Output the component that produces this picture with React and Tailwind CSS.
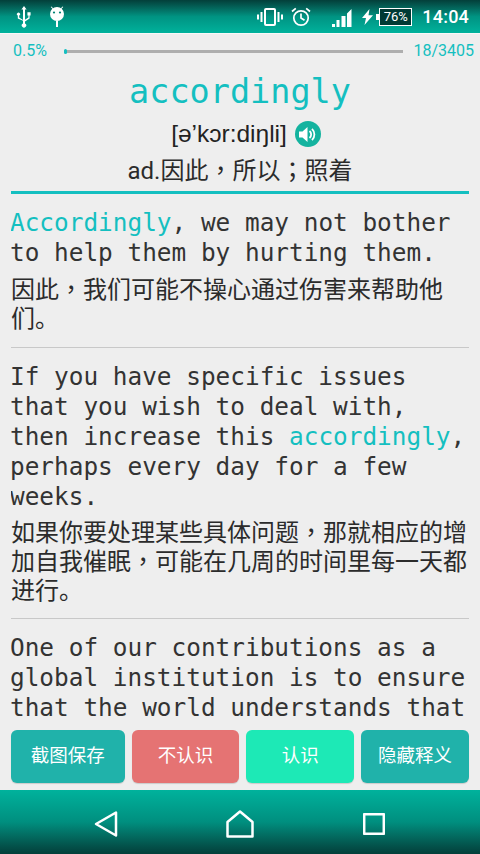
import React from 'react';

const cjk = '"Roboto","Noto Sans CJK SC",sans-serif';

// the screenshot's font centres the comma and semicolon, the TC face does that too
function Zh({ text }) {
  return text.split(/([，；])/).map((part, i) =>
    i % 2 === 1 ? (
      <span key={i} className="leading-none font-['Noto_Sans_CJK_TC',sans-serif]">{part}</span>
    ) : (
      part
    )
  );
}

function StatusBar() {
  return (
    <div className="h-[33px] shrink-0 bg-gradient-to-b from-[#033f3a] via-[#009382] to-[#00b29c] flex items-center text-white">
      {/* usb */}
      <svg width="16" height="22" viewBox="0 0 16 22" className="ml-[16px]" fill="white">
        <path d="M8 0l2.6 3.6H9v10.2l3.4-2.2V9.4h-1V6.2h3.2v3.2h-1v3l-4.6 3v2a2.2 2.2 0 1 1-2 0v-2.6L1.8 12.4V9.6a1.6 1.6 0 1 1 1.4 0v2l3.8 2.4V3.6H5.4z" />
      </svg>
      {/* android */}
      <svg width="16" height="22" viewBox="0 0 16 22" className="ml-[17px]" fill="white">
        <circle cx="8" cy="8" r="7" />
        <path d="M7 15h2v6H7zM2.4.4l3 3-.7.7-3-3zM13.6.4l.7.7-3 3-.7-.7z" />
        <circle cx="5" cy="6.500" r="1.100" fill="#008375" />
        <circle cx="11" cy="6.500" r="1.100" fill="#008375" />
      </svg>
      <div className="ml-auto flex items-center">
        {/* vibrate */}
        <svg width="26" height="18" viewBox="0 0 26 18" fill="none" stroke="white" strokeWidth="1.500">
          <rect x="8" y="1" width="10" height="16" rx="1" strokeWidth="2" />
          <path d="M4.500 4v10M1 6.500v5M21.500 4v10M25 6.500v5" strokeWidth="2" />
        </svg>
        {/* alarm */}
        <svg width="20" height="20" viewBox="0 0 20 20" fill="none" stroke="white" strokeWidth="1.700" className="ml-[8px]">
          <circle cx="10" cy="11" r="7.200" />
          <path d="M10 6.500V11l3.500 2.200M1 4.500L4.800 1.300M19 4.500L15.200 1.300" />
        </svg>
        {/* signal */}
        <svg width="20" height="20" viewBox="0 0 20 20" fill="white" className="ml-[21px]">
          <path d="M0 20h3v-3H0zM4.500 20h3v-7h-3zM9.500 20h4V9h-4zM15 20h4.500V2L15 6.500z" />
        </svg>
        {/* charging */}
        <svg width="11" height="16" viewBox="0 0 11 16" fill="white" className="ml-[10px]">
          <path d="M7.500 0L0 9h4l-1.500 7L11 6.200H6.500z" />
        </svg>
        {/* battery */}
        <div className="ml-[6px] relative w-[33px] h-[18px] border border-white bg-[#013a35] flex items-center justify-center text-[13px] leading-none font-['Roboto',sans-serif]">
          <span className="absolute -left-[4px] top-[5px] w-[3px] h-[6px] bg-white" />
          76%
        </div>
        <span className="ml-[10px] mr-[11px] text-[18px] font-medium tracking-[0.2px] leading-none font-['Roboto',sans-serif]">14:04</span>
      </div>
    </div>
  );
}

function Progress() {
  return (
    <div className="h-[34px] flex items-center pl-[13px] pr-[6px] text-[16px] text-[#14bfc0] font-['Roboto',sans-serif]">
      <span>0.5%</span>
      <div className="flex-1 h-[3px] bg-[#aeaeae] ml-[17px] mr-[10px] relative">
        <span className="absolute left-0 -top-px w-[3px] h-[5px] rounded-full bg-[#14bfc0]" />
      </div>
      <span>18/3405</span>
    </div>
  );
}

function Sentence({ en, zh, gap = 'mt-[8px]', pad = 'pb-[13px] border-b border-[#c8c8c8]' }) {
  return (
    <div className={`pt-[14px] ${pad}`}>
      <p className="-ml-px text-[24.400px] leading-[30px] whitespace-pre text-[#333333] font-['DejaVu_Sans_Mono',monospace]">{en}</p>
      {zh && (
        <p className={`${gap} text-[24px] leading-[29px] text-[#2b2b2b]`} style={{ fontFamily: cjk }}><Zh text={zh} /></p>
      )}
    </div>
  );
}

const hl = (t) => <span className="text-[#14bfc0]">{t}</span>;

export default function App() {
  const btn = 'h-[53px] rounded-[6px] text-white text-[18.500px] flex items-center justify-center shadow-[0_1px_1px_rgba(0,0,0,0.15)]';
  return (
    <div className="w-[480px] h-[854px] bg-[#eeeeee] flex flex-col overflow-hidden">
      <StatusBar />
      <div className="h-px shrink-0 bg-[#f8f8f8]" />
      <Progress />

      <div className="text-center text-[33.500px] leading-[44px] text-[#14bfc0] mt-[2px] font-['DejaVu_Sans_Mono',monospace]">accordingly</div>
      <div className="flex items-center justify-center ml-[12px] mt-[5px] h-[30px] text-[24.500px] text-[#222222] font-['Liberation_Sans',sans-serif]">
        <span>[ə’kɔr:diŋli]</span>
        <span className="ml-[8px] w-[26px] h-[26px] rounded-full bg-[#14b39f] flex items-center justify-center">
          <svg width="19" height="17" viewBox="0 0 19 17" fill="white">
            <path d="M1 5.500h3.500L9.500 1v15l-5-4.500H1z" />
            <path d="M11.500 5a4.500 4.500 0 0 1 0 7M14 2.800a8 8 0 0 1 0 11.400" fill="none" stroke="white" strokeWidth="1.800" />
          </svg>
        </span>
      </div>
      <div className="text-center text-[24px] leading-[30px] mt-[7px] text-[#2b2b2b]" style={{ fontFamily: cjk }}><Zh text="ad.因此，所以；照着" /></div>
      <div className="mx-[11px] mt-[5px] h-[3px] shrink-0 bg-[#14bfc0]" />

      <div className="flex-1 min-h-0 overflow-hidden mx-[11px]">
        <Sentence
          en={<>{hl('Accordingly')}, we may not bother{'\n'}to help them by hurting them.</>}
          zh="因此，我们可能不操心通过伤害来帮助他们。"
        />
        <Sentence
          gap="mt-[7px]"
          pad="pb-[12px] border-b border-[#c8c8c8]"
          en={<>If you have specific issues{'\n'}that you wish to deal with,{'\n'}then increase this {hl('accordingly')},{'\n'}perhaps every day for a few{'\n'}weeks.</>}
          zh="如果你要处理某些具体问题，那就相应的增加自我催眠，可能在几周的时间里每一天都进行。"
        />
        <Sentence
          pad=""
          en={<>One of our contributions as a{'\n'}global institution is to ensure{'\n'}that the world understands that</>}
        />
      </div>

      <div className="h-[70px] shrink-0 flex items-start pt-[10px] gap-[7px] pl-[11px] pr-[11px]" style={{ fontFamily: cjk }}>
        <div className={`${btn} w-[114px] bg-[#20b2aa]`}>截图保存</div>
        <div className={`${btn} w-[108px] bg-[#e57373]`}>不认识</div>
        <div className={`${btn} w-[108px] bg-[#1de9b6]`}>认识</div>
        <div className={`${btn} w-[108px] bg-[#20b2aa]`}>隐藏释义</div>
      </div>

      <div className="h-[64px] shrink-0 pt-[3px] bg-gradient-to-b from-[#00b29c] via-[#008f7f] to-[#033f3a] flex items-center">
        <svg width="24" height="26" viewBox="0 0 24 26" fill="none" stroke="white" strokeWidth="2.500" strokeLinejoin="round" className="ml-[94px]">
          <path d="M22 1.500v23L2 13z" />
        </svg>
        <svg width="28" height="28" viewBox="0 0 28 28" fill="none" stroke="white" strokeWidth="2.500" strokeLinejoin="round" className="ml-[108px]">
          <path d="M1.500 12L14 1.500 26.500 12v14.500h-25z" />
        </svg>
        <svg width="22" height="22" viewBox="0 0 22 22" fill="none" stroke="white" strokeWidth="2.500" strokeLinejoin="round" className="ml-[109px]">
          <rect x="1.200" y="1.200" width="19.600" height="19.600" />
        </svg>
      </div>
    </div>
  );
}
